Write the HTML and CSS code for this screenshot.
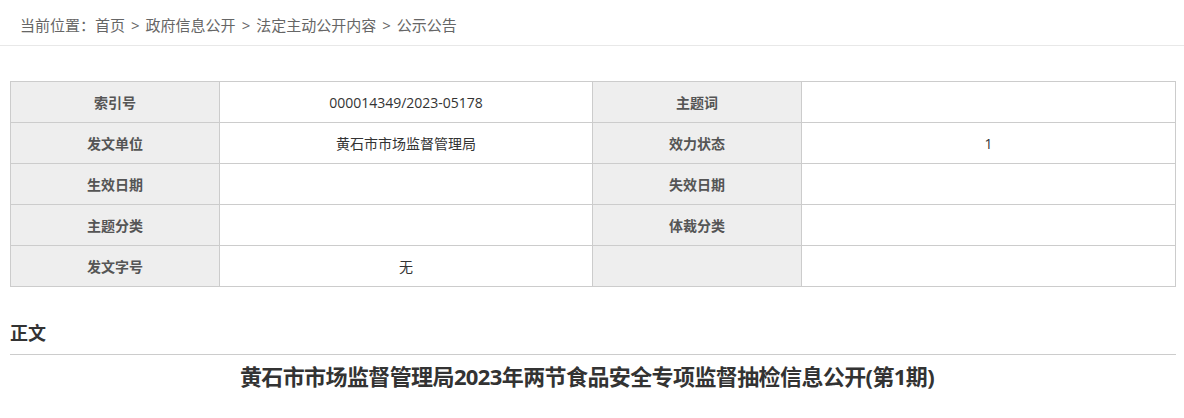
FILE: index.html
```html
<!DOCTYPE html>
<html lang="zh-CN">
<head>
    <meta charset="UTF-8">
    <title>公示公告</title>
    <link rel="stylesheet" href="styles.css">
</head>
<body>
    <div class="crumb">
        当前位置：<a href="#">首页</a><span class="sep">&gt;</span><a href="#">政府信息公开</a><span class="sep">&gt;</span><a href="#">法定主动公开内容</a><span class="sep">&gt;</span><a href="#">公示公告</a>
    </div>
    <div class="container">
        <table class="meta">
            <colgroup>
                <col class="c-label"><col class="c-value"><col class="c-label"><col>
            </colgroup>
            <tr>
                <th>索引号</th><td>000014349/2023-05178</td>
                <th>主题词</th><td></td>
            </tr>
            <tr>
                <th>发文单位</th><td>黄石市市场监督管理局</td>
                <th>效力状态</th><td>1</td>
            </tr>
            <tr>
                <th>生效日期</th><td></td>
                <th>失效日期</th><td></td>
            </tr>
            <tr>
                <th>主题分类</th><td></td>
                <th>体裁分类</th><td></td>
            </tr>
            <tr>
                <th>发文字号</th><td>无</td>
                <th></th><td></td>
            </tr>
        </table>
        <h3 class="section">正文</h3>
        <h1 class="title">黄石市市场监督管理局2023年两节食品安全专项监督抽检信息公开(第1期)</h1>
    </div>
</body>
</html>
```

FILE: styles.css
```css
body {
    margin: 0;
    font-family: "Open Sans", "Noto Sans CJK SC", sans-serif;
    color: #333;
    background: #fff;
}
a {
    color: #666;
    text-decoration: none;
}
.crumb {
    height: 46px;
    line-height: 50px;
    padding-left: 20px;
    font-size: 15px;
    color: #666;
    border-bottom: 1px solid #e8e8e8;
    box-sizing: border-box;
}
.crumb .sep {
    margin: 0 6px;
}
.container {
    padding: 35px 8px 0 10px;
}
.meta {
    width: 100%;
    border-collapse: collapse;
    table-layout: fixed;
    font-size: 14px;
}
.meta .c-label {
    width: 209px;
}
.meta .c-value {
    width: 373px;
}
.meta th, .meta td {
    border: 1px solid #ccc;
    height: 40px;
    padding: 0;
    text-align: center;
}
.meta th {
    background: #eee;
    color: #555;
    font-weight: bold;
}
.meta td {
    color: #333;
}
.section {
    margin: 33px 0 0;
    padding-bottom: 8px;
    font-size: 18px;
    line-height: 26px;
    color: #333;
    border-bottom: 1px solid #ccc;
}
.title {
    margin: 4px 0 0;
    padding-right: 12px;
    font-size: 22px;
    line-height: 34px;
    letter-spacing: -0.6px;
    text-align: center;
    color: #333;
}
```
